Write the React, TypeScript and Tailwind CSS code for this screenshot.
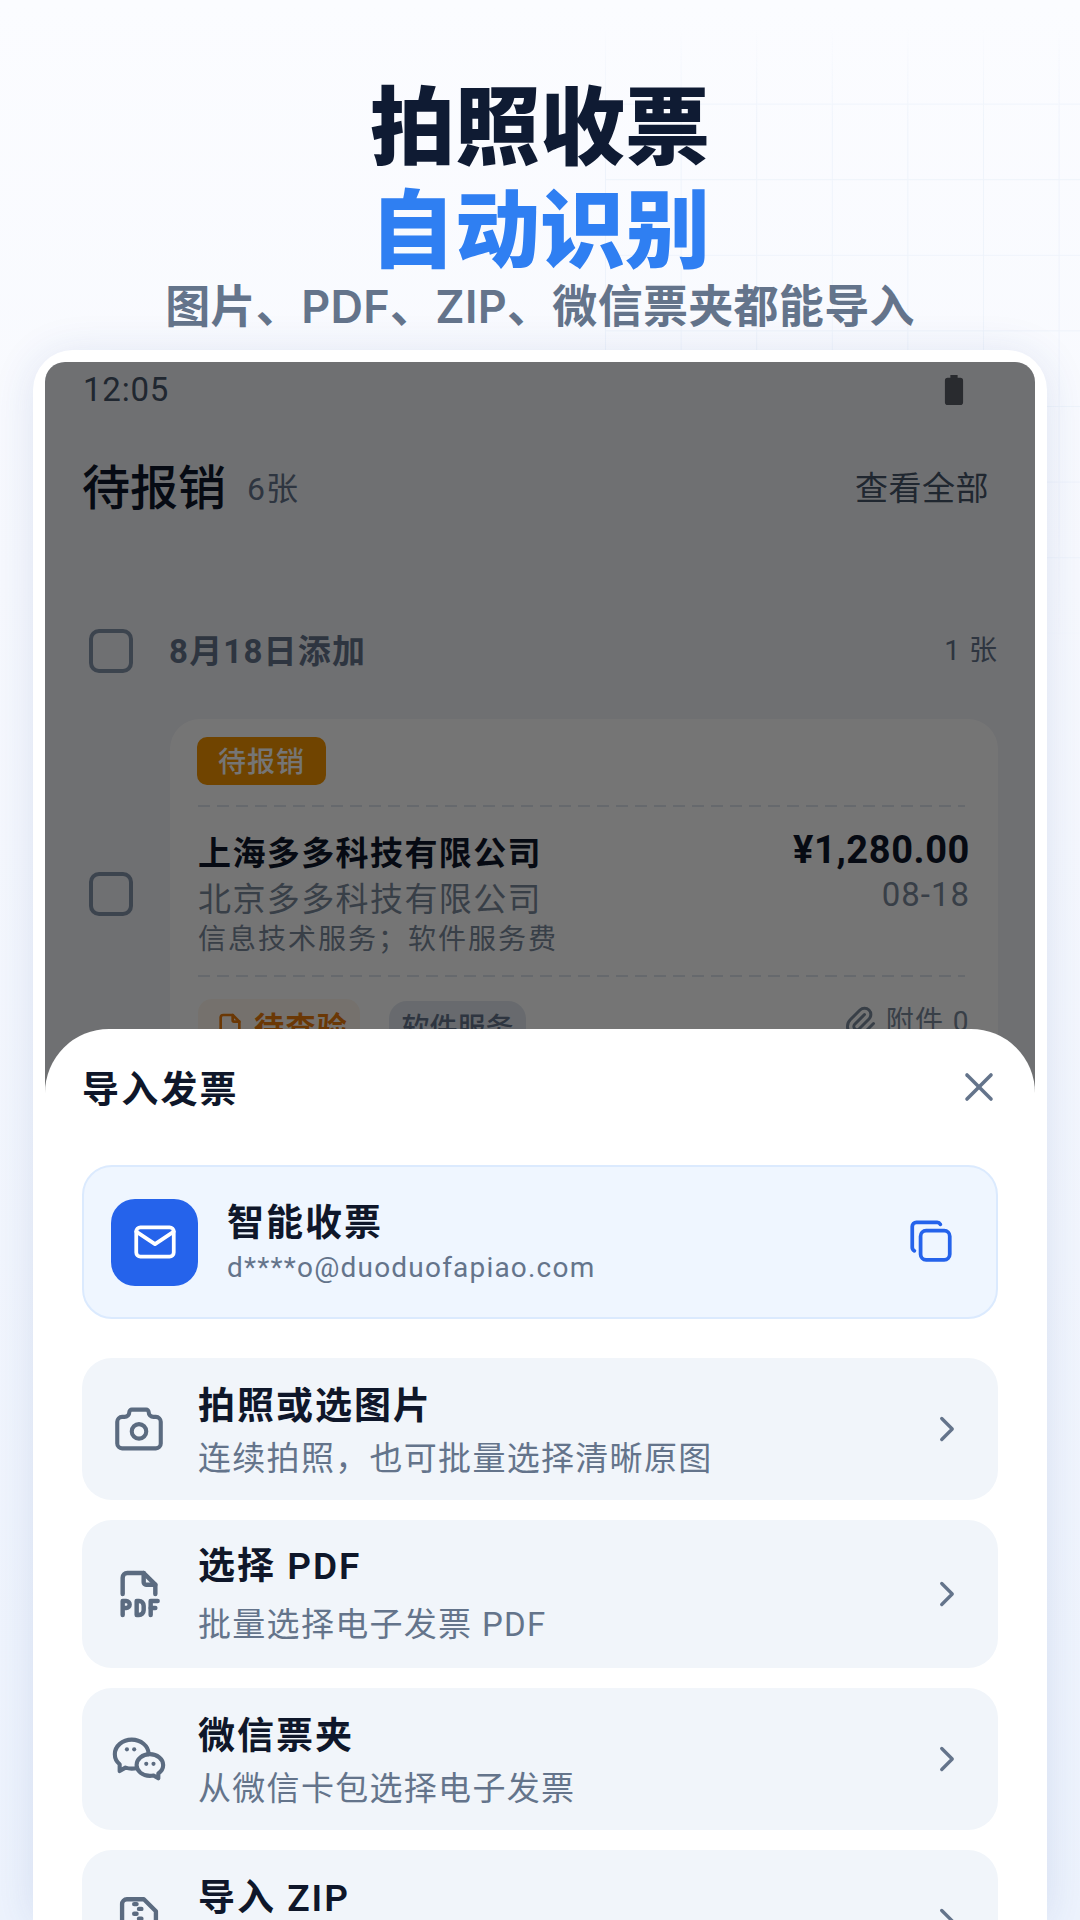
import React from "react";
import { TbBrandWechat, TbCamera, TbChevronRight, TbCopy, TbFile, TbFileTypePdf, TbFileZip, TbMail, TbPaperclip, TbX } from "react-icons/tb";

const cjk = "font-['Roboto','Noto_Sans_CJK_SC',sans-serif]";

function Check() {
  return <div className="w-[44px] h-[44px] rounded-[10px] border-[4px] border-[#8494aa] shrink-0" />;
}

function Dash() {
  return <div className="h-[2px] mr-[5px] bg-[repeating-linear-gradient(to_right,#dfe5ee_0_12px,transparent_12px_19px)]" />;
}

function Row({ h, title, sub, icon, subGap = "", blockMt = "mt-[6px]" }: { h: string; title: string; sub: string; icon: React.ReactNode; subGap?: string; blockMt?: string }) {
  return (
    <div className={`${h} shrink-0 rounded-[30px] bg-[#f1f5fa] flex items-center pl-[28px] pr-[30px]`}>
      <div className="w-[58px] h-[58px] flex items-center justify-center text-[#5b6b80] shrink-0">{icon}</div>
      <div className={`ml-[30px] flex-1 min-w-0 ${blockMt}`}>
        <div className="text-[37px] leading-[54px] font-semibold tracking-[2px] text-[#0f172a]">{title}</div>
        <div className={`h-[50px] text-[33px] leading-[50px] tracking-[1.3px] text-[#64748b] ${subGap}`}>{sub}</div>
      </div>
      <TbChevronRight size={42} strokeWidth={1.9} className="text-[#64748b]" />
    </div>
  );
}

export default function App() {
  return (
    <div className={`relative w-[1080px] h-[1920px] overflow-hidden flex flex-col bg-[linear-gradient(180deg,#fbfcff_0%,#f7f9fe_30%,#edf3fd_100%)] ${cjk}`}>
      <div className="absolute left-[605px] top-[28px] w-[475px] h-[620px] bg-[linear-gradient(to_right,#eef3fb_1px,transparent_1px),linear-gradient(to_bottom,#eef3fb_1px,transparent_1px)] bg-[size:75.6px_75.6px] [mask-image:linear-gradient(to_bottom,transparent,black_15%,black_80%,transparent)]" />

      <div className="relative h-[350px] shrink-0 flex flex-col items-center pt-[78px]">
        <div className="text-[85px] leading-[103px] font-black text-[#0f1b33]">拍照收票</div>
        <div className="text-[85px] leading-[103px] font-black text-[#2f7ff2]">自动识别</div>
        <div className="font-['Inter','Noto_Sans_CJK_SC',sans-serif] text-[45px] leading-[54px] font-semibold tracking-[0.3px] text-[#64748b] -mt-[4px]">图片、PDF、ZIP、微信票夹都能导入</div>
      </div>

      <div className="relative ml-[33px] w-[1014px] flex-1 min-h-0 bg-white rounded-t-[40px] p-[12px] pb-0 shadow-[0_4px_44px_rgba(30,64,150,0.12)]">
        <div className="relative h-[1700px] rounded-t-[20px] overflow-hidden bg-[#f1f3f8]">
          <div className="pl-[38px] pr-[37px]">
            <div className="h-[56px] flex items-center justify-between pr-[34px]">
              <span className="text-[33px] tracking-[0.8px] text-[#475569]">12:05</span>
              <svg width="20" height="30" viewBox="0 0 22 32" preserveAspectRatio="none"><path d="M7 0h8v3h3a3 3 0 0 1 3 3v23a3 3 0 0 1-3 3H4a3 3 0 0 1-3-3V6a3 3 0 0 1 3-3h3z" fill="#5b5f66" /></svg>
            </div>
            <div className="mt-[40px] h-[62px] flex items-center justify-between pr-[9px]">
              <div className="flex items-center">
                <span className="-ml-[1px] text-[48px] leading-[62px] text-[#0f172a] font-medium">待报销</span>
                <span className="ml-[21px] text-[32px] tracking-[1px] text-[#64748b]">6张</span>
              </div>
              <span className="text-[33px] tracking-[0.5px] text-[#475569]">查看全部</span>
            </div>
            <div className="mt-[109px] h-[44px] flex items-center">
              <div className="ml-[6px]"><Check /></div>
              <span className="ml-[36px] mt-[2px] text-[33px] font-bold tracking-[1.2px] text-[#64748b]">8月18日添加</span>
              <span className="ml-auto text-[28px] tracking-[1px] text-[#64748b]">1 张</span>
            </div>
            <div className="mt-[46px] flex items-center">
              <div className="ml-[6px] self-start mt-[153px]"><Check /></div>
              <div className="ml-[37px] flex-1 rounded-[30px] bg-white pl-[28px] pr-[28px] pt-[18px] h-[420px]">
                <div className="-ml-[1px] w-[129px] h-[48px] rounded-[10px] bg-[#f59500] text-white text-[28px] tracking-[1px] flex items-center justify-center font-medium pt-[3px]">待报销</div>
                <div className="mt-[20px]"><Dash /></div>
                <div className="mt-[22px] flex justify-between">
                  <div>
                    <div className="text-[33px] leading-[50px] font-bold tracking-[1.4px] text-[#0f172a]">上海多多科技有限公司</div>
                    <div className="text-[33px] leading-[42px] tracking-[1.4px] text-[#7b899c]">北京多多科技有限公司</div>
                    <div className="text-[28px] leading-[38px] tracking-[2px] text-[#7b899c]">信息技术服务；软件服务费</div>
                  </div>
                  <div className="text-right -mt-[3px]">
                    <div className="text-[38px] leading-[48px] font-bold tracking-[0.6px] text-[#0f172a]">¥1,280.00</div>
                    <div className="text-[33px] leading-[42px] tracking-[1px] text-[#7b899c]">08-18</div>
                  </div>
                </div>
                <div className="mt-[16px]"><Dash /></div>
                <div className="mt-[22px] flex items-start">
                  <div className="h-[56px] w-[162px] rounded-[14px] bg-[#fff7ed] flex items-center pl-[16px] text-[#ea7a0c] text-[30px] font-bold tracking-[1.4px]">
                    <TbFile size={32} strokeWidth={2} className="mr-[8px]" />待查验
                  </div>
                  <div className="ml-[29px] mt-[2px] h-[56px] w-[137px] rounded-[18px] bg-[#e2e8f0] flex items-center justify-center text-[#64748b] text-[28px] font-medium">软件服务</div>
                  <div className="ml-auto mt-[2px] flex items-center text-[#7b899c] text-[28px] tracking-[1.4px]">
                    <TbPaperclip size={36} strokeWidth={2} className="mr-[8px]" />附件 0
                  </div>
                </div>
              </div>
            </div>
          </div>

          <div className="absolute inset-0 bg-[rgba(0,0,0,0.54)]" />

          <div className="absolute left-0 right-0 top-[667px] bottom-0 bg-white rounded-t-[64px] px-[37px]">
            <div className="h-[136px] flex items-start justify-between">
              <span className="mt-[37px] text-[37px] leading-[50px] font-semibold tracking-[2.2px] text-[#0f172a]">导入发票</span>
              <TbX size={48} strokeWidth={1.8} className="mt-[34px] mr-[-5px] text-[#64748b]" />
            </div>
            <div className="h-[154px] rounded-[30px] bg-[#eff6ff] border-[2px] border-[#dbeafe] flex items-center pl-[27px] pr-[40px]">
              <div className="w-[87px] h-[87px] rounded-[24px] bg-[#2563eb] flex items-center justify-center text-white"><TbMail size={50} strokeWidth={1.8} /></div>
              <div className="ml-[29px] flex-1">
                <div className="text-[37px] leading-[52px] font-semibold tracking-[2px] text-[#0f172a]">智能收票</div>
                <div className="text-[28px] leading-[36px] tracking-[1.2px] text-[#64748b]">d****o@duoduofapiao.com</div>
              </div>
              <TbCopy size={50} strokeWidth={1.8} className="text-[#2563eb] -mt-[2px]" />
            </div>
            <div className="mt-[39px] flex flex-col gap-[20px]">
              <Row h="h-[142px]" title="拍照或选图片" sub="连续拍照，也可批量选择清晰原图" icon={<TbCamera size={60} strokeWidth={1.7} />} />
              <Row h="h-[148px]" title="选择 PDF" sub="批量选择电子发票 PDF" subGap="mt-[6px]" blockMt="mt-[2px]" icon={<TbFileTypePdf size={56} strokeWidth={1.9} />} />
              <Row h="h-[142px]" title="微信票夹" sub="从微信卡包选择电子发票" icon={<TbBrandWechat size={64} strokeWidth={1.7} />} />
              <Row h="h-[142px]" title="导入 ZIP" sub="" icon={<TbFileZip size={58} strokeWidth={1.8} />} />
            </div>
          </div>
        </div>
      </div>
    </div>
  );
}
